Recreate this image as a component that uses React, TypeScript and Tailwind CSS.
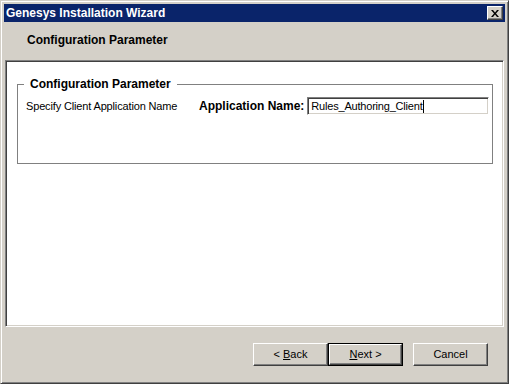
import React from 'react';

const font = "font-['Liberation_Sans',Arial,sans-serif]";

const Button = ({ children, isDefault = false }: { children: React.ReactNode; isDefault?: boolean }) => (
  <div className={`w-[75px] h-[23px] ${isDefault ? 'border border-black' : ''}`}>
    <button
      className={`w-full h-full bg-[#d4d0c8] border border-t-white border-l-white border-r-[#404040] border-b-[#404040] shadow-[inset_-1px_-1px_0_#808080] text-[11px] text-black flex items-center justify-center ${font}`}
    >
      <span className="whitespace-pre">{children}</span>
    </button>
  </div>
);

export default function App() {
  return (
    <div className={`w-[509px] h-[384px] bg-[#d4d0c8] ${font}`}>
      <div className="w-full h-full flex flex-col border border-t-[#d4d0c8] border-l-[#d4d0c8] border-r-[#404040] border-b-[#404040] shadow-[inset_1px_1px_0_#fff,inset_-1px_-1px_0_#808080] p-[3px]">
        {/* Title bar */}
        <div className="h-[18px] bg-[#0a246a] flex items-center justify-between pl-[2px] pr-[2px]">
          <span className="text-white text-[12px] font-bold leading-none">Genesys Installation Wizard</span>
          <div className="w-[16px] h-[14px] bg-[#d4d0c8] border border-t-white border-l-white border-r-[#404040] border-b-[#404040] shadow-[inset_-1px_-1px_0_#808080] flex items-center justify-center">
            <svg width="8" height="7" viewBox="0 0 8 7">
              <path d="M0 0h2l2 2.5L6 0h2L5 3.5 8 7H6L4 4.5 2 7H0l3-3.5z" fill="#000" />
            </svg>
          </div>
        </div>

        {/* Header */}
        <div className="h-[38px] flex items-center pl-[23px] pb-[2px]">
          <span className="text-[12px] font-bold text-black">Configuration Parameter</span>
        </div>

        {/* Content panel */}
        <div className="flex-1 ml-[1px] mr-[1px] border border-t-[#808080] border-l-[#808080] border-r-white border-b-white shadow-[inset_1px_1px_0_#404040,inset_-1px_-1px_0_#d4d0c8] bg-white p-[2px]">
          <div className="mt-[21px] ml-[9px] mr-[8px] h-[80px] relative border border-[#808080] pt-[12px] pl-[8px]">
            <span className="absolute -top-[8px] left-[6px] bg-white px-[6px] text-[12px] font-bold text-black leading-[14px]">
              Configuration Parameter
            </span>
            <div className="flex items-center">
              <span className="text-[11px] tracking-[-0.15px] text-black w-[173px]">Specify Client Application Name</span>
              <span className="text-[12px] font-bold text-black mr-[3px]">Application Name:</span>
              <div className="w-[182px] h-[18px] border border-t-[#808080] border-l-[#808080] border-r-white border-b-white shadow-[inset_1px_1px_0_#404040,inset_-1px_-1px_0_#d4d0c8] flex items-center pl-[3px]">
                <span className="text-[11px] tracking-[-0.2px] text-black">Rules_Authoring_Client</span>
                <span className="w-px h-[13px] bg-black" />
              </div>
            </div>
          </div>
        </div>

        {/* Buttons */}
        <div className="h-[53px] flex items-start justify-end pt-[16px] pr-[17px] gap-[10px]">
          <div className="flex">
            <Button>
              {'< '}<span className="underline">B</span>ack
            </Button>
            <Button isDefault>
              <span className="underline">N</span>ext {'>'}
            </Button>
          </div>
          <Button>Cancel</Button>
        </div>
      </div>
    </div>
  );
}
